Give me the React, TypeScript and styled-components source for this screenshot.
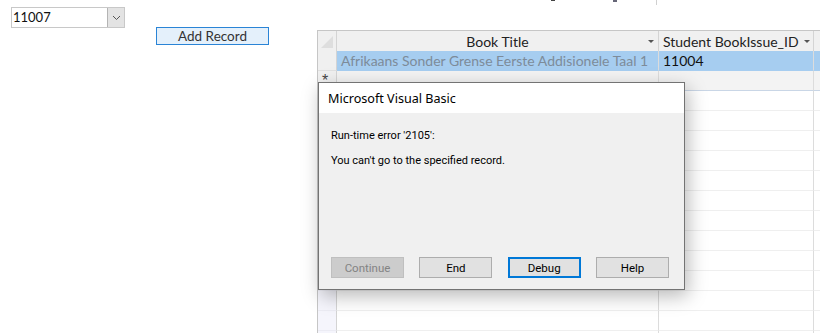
import React from "react";
import styled, { createGlobalStyle } from "styled-components";

const Global = createGlobalStyle`
  html, body { margin: 0; padding: 0; background: #ffffff; overflow: hidden; }
  #root { width: 820px; height: 333px; }
`;

const Page = styled.div`
  position: relative;
  width: 820px;
  height: 333px;
  overflow: hidden;
  display: grid;
  grid-template-columns: 317px 1fr;
  font-family: Lato, "Liberation Sans", sans-serif;
`;

const LeftPane = styled.div`
  display: flex;
  flex-direction: column;
  align-items: flex-start;
  padding: 7px 0 0 11px;
`;

const Combo = styled.div`
  display: flex;
  width: 114px;
  height: 21px;
  box-sizing: border-box;
  border: 1px solid #c8c8c8;
  background: #fff;
`;

const ComboText = styled.div`
  flex: 1;
  font-size: 13px;
  line-height: 19px;
  padding-left: 1px;
  color: #111;
`;

const ComboButton = styled.div`
  width: 17px;
  box-sizing: border-box;
  background: #e3e3e3;
  border-left: 1px solid #b4b4b4;
  display: flex;
  align-items: center;
  justify-content: center;
`;

const AddButton = styled.div`
  margin: -1px 0 0 145px;
  width: 113px;
  height: 18px;
  box-sizing: border-box;
  border: 1px solid #2a84d6;
  background: #e4f0fb;
  color: #333;
  font-size: 13.5px;
  line-height: 16px;
  text-align: center;
`;

const RightPane = styled.div`
  display: flex;
  flex-direction: column;
`;

const TopStrip = styled.div`
  height: 30px;
  display: flex;
  align-items: flex-start;
`;

const Mark = styled.span<{ $left: number; $w: number; $h: number; $c: string }>`
  margin-left: ${(p) => p.$left}px;
  width: ${(p) => p.$w}px;
  height: ${(p) => p.$h}px;
  background: ${(p) => p.$c};
`;

const Sheet = styled.div`
  display: grid;
  grid-template-columns: 19px 322px 155px 60px;
  grid-auto-rows: 20px;
  border-top: 1px solid #c6c6c6;
  border-left: 1px solid #c6c6c6;
  font-size: 14px;
`;

const HeadCell = styled.div<{ $center?: boolean }>`
  background: #f0f0f0;
  border-right: 1px solid #d4d4d4;
  box-sizing: border-box;
  display: flex;
  align-items: center;
  justify-content: ${(p) => (p.$center ? "center" : "flex-start")};
  padding: 0 4px;
  color: #222;
  position: relative;
  white-space: nowrap;
  overflow: hidden;
`;

const Corner = styled.div`
  background: #f0f0f0;
  border-right: 1px solid #d4d4d4;
  box-sizing: border-box;
  display: flex;
  align-items: flex-end;
  justify-content: flex-end;
  padding: 0 3px 3px 0;
`;

const Arrow = styled.span<{ $abs?: boolean }>`
  width: 0;
  height: 0;
  border-left: 3px solid transparent;
  border-right: 3px solid transparent;
  border-top: 3px solid #555;
  margin-left: 5px;
  ${(p) => (p.$abs ? "position: absolute; right: 4px; top: 9px;" : "")}
`;

const Selector = styled.div<{ $bg: string; $line: string }>`
  background: ${(p) => p.$bg};
  border-right: 1px solid #d4d4d4;
  border-bottom: 1px solid ${(p) => p.$line};
  box-sizing: border-box;
  font-family: "Liberation Sans", sans-serif;
  font-size: 16px;
  line-height: 20px;
  padding-left: 4px;
  color: #444;
  overflow: hidden;
`;

const Cell = styled.div<{ $bg: string; $color?: string; $line: string }>`
  background: ${(p) => p.$bg};
  color: ${(p) => p.$color || "#111"};
  border-right: 1px solid #dcdcdc;
  border-bottom: 1px solid ${(p) => p.$line};
  box-sizing: border-box;
  padding: 0 4px;
  line-height: 19px;
  white-space: nowrap;
  overflow: hidden;
`;

const Dialog = styled.div`
  position: absolute;
  left: 318px;
  top: 82px;
  width: 367px;
  height: 208px;
  box-sizing: border-box;
  border: 1px solid #737373;
  background: #f0f0f0;
  box-shadow: 3px 6px 18px rgba(0, 0, 0, 0.28);
  display: flex;
  flex-direction: column;
  font-family: Roboto, "Noto Sans", sans-serif;
  font-size: 11px;
  color: #000;
`;

const TitleBar = styled.div`
  height: 30px;
  background: #fff;
  padding: 0 9px;
  line-height: 32px;
  font-family: "Noto Sans", "Open Sans", sans-serif;
  font-size: 12.6px;
`;

const DialogBody = styled.div`
  flex: 1;
  display: flex;
  flex-direction: column;
  padding: 15px 15px 11px 12px;
`;

const Message = styled.div`
  line-height: 16px;
  margin-bottom: 9px;
`;

const ButtonRow = styled.div`
  margin-top: auto;
  display: flex;
  justify-content: space-between;
`;

const DlgButton = styled.div<{ $disabled?: boolean; $focus?: boolean }>`
  width: 73px;
  height: 21px;
  box-sizing: border-box;
  border: ${(p) => (p.$focus ? "2px solid #0078d7" : p.$disabled ? "1px solid #bfbfbf" : "1px solid #adadad")};
  background: ${(p) => (p.$disabled ? "#cccccc" : "#e1e1e1")};
  color: ${(p) => (p.$disabled ? "#838383" : "#000")};
  font-size: 11.5px;
  display: flex;
  align-items: center;
  justify-content: center;
`;

const rowCount = 13;

export default function App() {
  const emptyRows = Array.from({ length: rowCount }, (_, i) => i);
  return (
    <>
      <Global />
      <Page>
        <LeftPane>
          <Combo>
            <ComboText>11007</ComboText>
            <ComboButton>
              <svg width="9" height="6" viewBox="0 0 9 6">
                <path d="M1 1 L4.5 4.5 L8 1" fill="none" stroke="#555" strokeWidth="1" />
              </svg>
            </ComboButton>
          </Combo>
          <AddButton>Add Record</AddButton>
        </LeftPane>
        <RightPane>
          <TopStrip>
            <Mark $left={234} $w={4} $h={1} $c="#444" />
            <Mark $left={58} $w={4} $h={2} $c="#667" />
            <Mark $left={39} $w={1} $h={5} $c="#d0d0d0" />
          </TopStrip>
          <Sheet>
            <Corner>
              <svg width="12" height="12" viewBox="0 0 12 12">
                <path d="M12 0 L12 12 L0 12 Z" fill="#dedede" />
              </svg>
            </Corner>
            <HeadCell $center>
              Book Title
              <Arrow $abs />
            </HeadCell>
            <HeadCell>
              Student BookIssue_ID
              <Arrow />
            </HeadCell>
            <HeadCell />

            <Selector $bg="#f0f0f0" $line="#e0e0e0" />
            <Cell $bg="#a6cdf0" $color="#7d8b99" $line="#a6cdf0">
              Afrikaans Sonder Grense Eerste Addisionele Taal 1
            </Cell>
            <Cell $bg="#a6cdf0" $line="#a6cdf0">11004</Cell>
            <Cell $bg="#a6cdf0" $line="#a6cdf0" />

            <Selector $bg="#f0f0f0" $line="#c9d6e6">*</Selector>
            <Cell $bg="#f3f3f3" $line="#c9d6e6" />
            <Cell $bg="#f3f3f3" $line="#c9d6e6" />
            <Cell $bg="#f3f3f3" $line="#c9d6e6" />

            {emptyRows.map((i) => (
              <React.Fragment key={i}>
                <Selector $bg="#f5f5fc" $line="#ececf4" />
                <Cell $bg="#fff" $line="#efefef" />
                <Cell $bg="#fff" $line="#efefef" />
                <Cell $bg="#fff" $line="#efefef" />
              </React.Fragment>
            ))}
          </Sheet>
        </RightPane>
        <Dialog>
          <TitleBar>Microsoft Visual Basic</TitleBar>
          <DialogBody>
            <Message>Run-time error '2105':</Message>
            <Message>You can't go to the specified record.</Message>
            <ButtonRow>
              <DlgButton $disabled>Continue</DlgButton>
              <DlgButton>End</DlgButton>
              <DlgButton $focus>Debug</DlgButton>
              <DlgButton>Help</DlgButton>
            </ButtonRow>
          </DialogBody>
        </Dialog>
      </Page>
    </>
  );
}
